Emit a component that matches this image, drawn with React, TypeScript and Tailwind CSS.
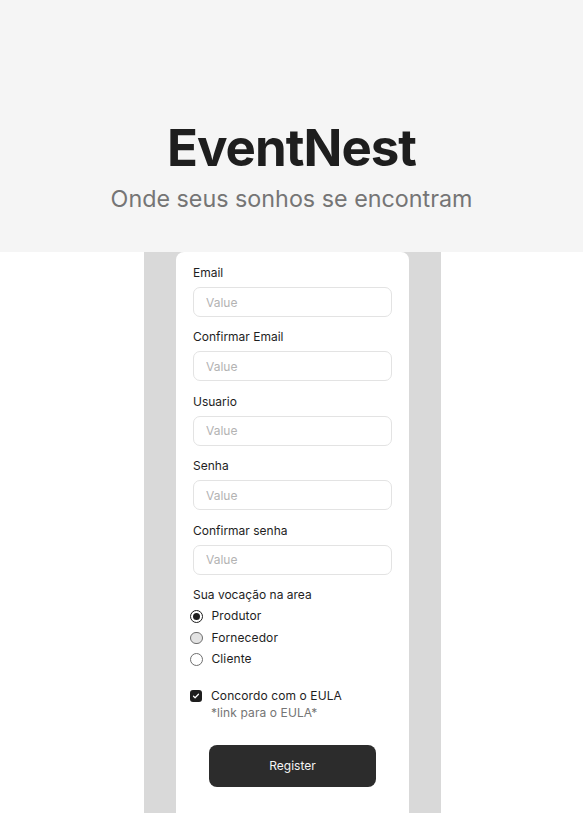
import { useState } from "react";

const fields = ["Email", "Confirmar Email", "Usuario", "Senha", "Confirmar senha"];
const roles = ["Produtor", "Fornecedor", "Cliente"];

function Field({ label }: { label: string }) {
  return (
    <div className="flex flex-col">
      <label className="text-[12px] leading-[17px] text-[#1e1e1e]">{label}</label>
      <input
        placeholder="Value"
        className="mt-[6px] h-[30px] w-full rounded-[7px] border border-[#e3e3e3] bg-white px-[12px] text-[12px] text-[#1e1e1e] outline-none placeholder:text-[#b3b3b3]"
      />
    </div>
  );
}

function Radio({ label, checked, hover, onClick }: { label: string; checked: boolean; hover?: boolean; onClick: () => void }) {
  return (
    <button type="button" onClick={onClick} className="flex h-[21.5px] items-center gap-[9px] text-left">
      {checked ? (
        <span className="flex h-[12.5px] w-[12.5px] items-center justify-center rounded-full border border-[#1e1e1e] bg-white">
          <span className="h-[7px] w-[7px] rounded-full bg-[#1e1e1e]" />
        </span>
      ) : (
        <span className={`h-[12.5px] w-[12.5px] rounded-full border border-[#6e6e6e] ${hover ? "bg-[#e3e3e3]" : "bg-white"}`} />
      )}
      <span className="text-[12px] tracking-[0.1px] text-[#1e1e1e]">{label}</span>
    </button>
  );
}

export default function App() {
  const [role, setRole] = useState("Produtor");
  const [agree, setAgree] = useState(true);

  return (
    <div className="min-h-[813px] bg-white font-['Inter',sans-serif]">
      {/* cabeçalho */}
      <header className="flex h-[252px] flex-col items-center bg-[#f5f5f5] pt-[117px]">
        <h1 className="text-[51px] font-bold leading-[62px] tracking-[-1px] text-[#1e1e1e]">EventNest</h1>
        <p className="mt-[5px] text-[23.3px] leading-[30px] text-[#757575]">Onde seus sonhos se encontram</p>
      </header>

      <div className="ml-[144px] flex min-h-[561px] w-[297px] justify-center bg-[#d9d9d9]">
        <form
          onSubmit={(e) => e.preventDefault()}
          className="flex w-[233px] flex-col rounded-t-[8px] bg-white px-[17px] pt-[12px] pb-[26px]"
        >
          <div className="flex flex-col gap-[11.4px]">
            {fields.map((f) => (
              <Field key={f} label={f} />
            ))}
          </div>

          <p className="mt-[11px] text-[12px] leading-[17px] text-[#1e1e1e]">Sua vocação na area</p>
          <div className="-ml-[3px] mt-[3px] flex flex-col">
            {roles.map((r) => (
              <Radio key={r} label={r} checked={role === r} hover={r === "Fornecedor"} onClick={() => setRole(r)} />
            ))}
          </div>

          <div className="-ml-[3px] mt-[17px] flex items-start gap-[9px]">
            <button
              type="button"
              onClick={() => setAgree(!agree)}
              className={`mt-[3px] flex h-[12px] w-[12px] items-center justify-center rounded-[3px] ${agree ? "bg-[#1e1e1e]" : "border border-[#757575]"}`}
            >
              {agree && (
                <svg width="8" height="8" viewBox="0 0 16 16" fill="none">
                  <path d="M3 8.5l3.2 3L13 4.5" stroke="white" strokeWidth="2.4" strokeLinecap="round" strokeLinejoin="round" />
                </svg>
              )}
            </button>
            <div className="flex flex-col">
              <span className="text-[12px] leading-[17px] tracking-[0.1px] text-[#1e1e1e]">Concordo com o EULA</span>
              <span className="text-[12px] leading-[17px] tracking-[0.1px] text-[#757575]">*link para o EULA*</span>
            </div>
          </div>

          <button className="mx-auto mt-[24px] h-[42px] w-[167px] rounded-[8px] bg-[#2c2c2c] text-[12px] text-[#f5f5f5]">
            Register
          </button>
        </form>
      </div>
    </div>
  );
}
